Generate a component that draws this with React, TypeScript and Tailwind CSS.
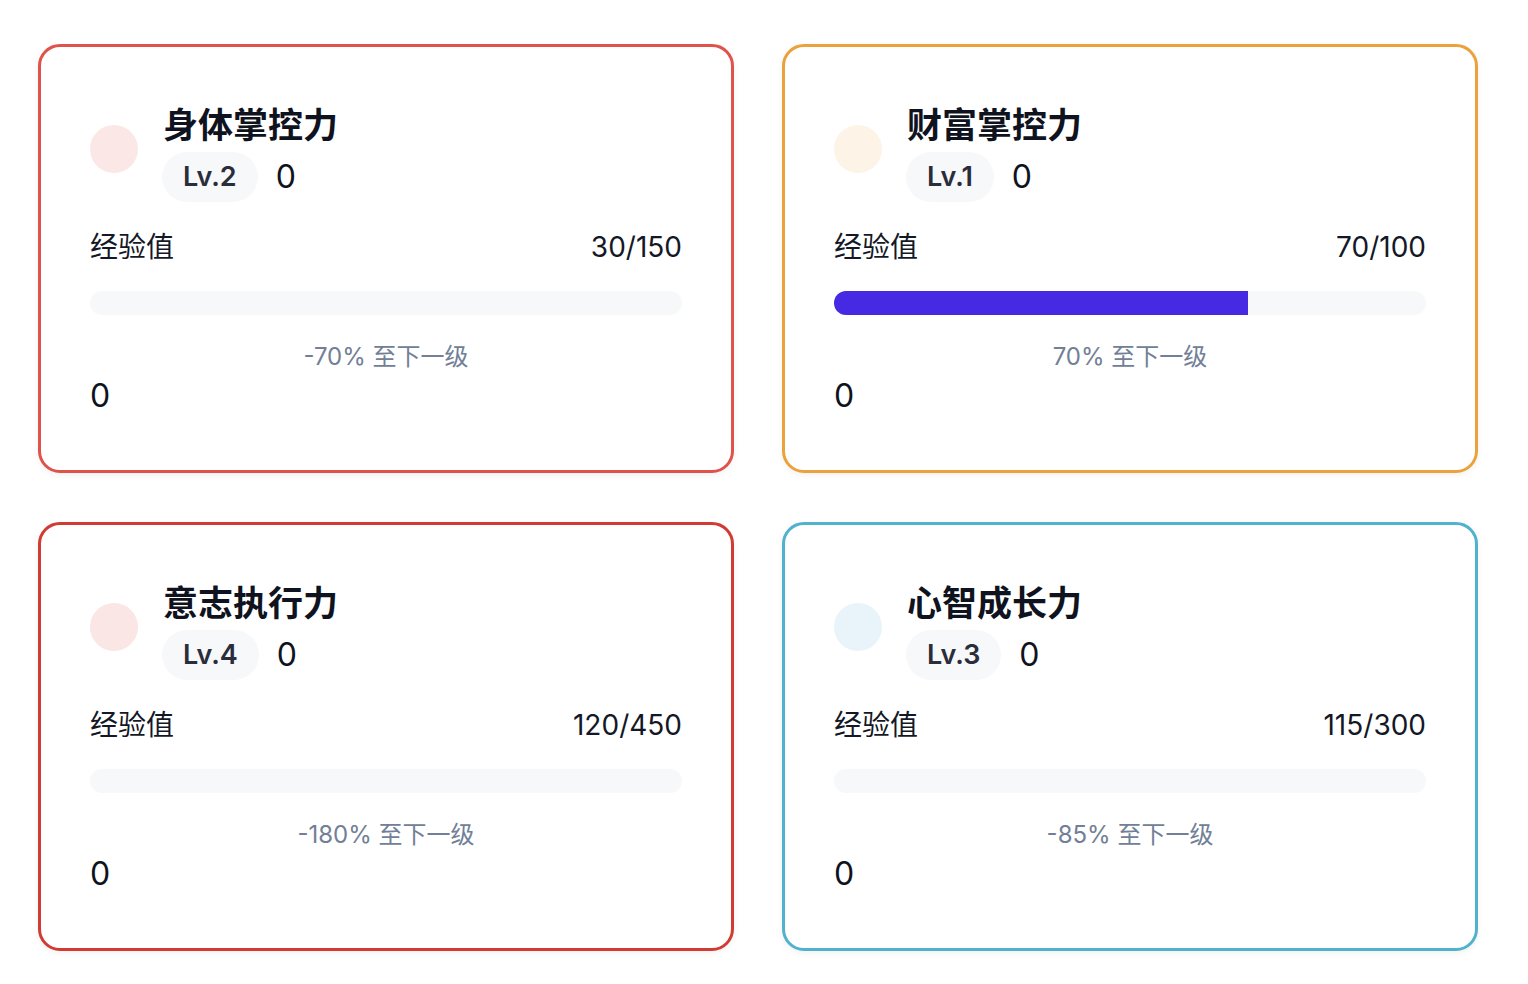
import React from "react";

type Skill = {
  name: string;
  level: number;
  exp: number;
  max: number;
  percent: string;
  fill: number;
  border: string;
  dot: string;
};

const SKILLS: Skill[] = [
  {
    name: "身体掌控力",
    level: 2,
    exp: 30,
    max: 150,
    percent: "-70%",
    fill: 0,
    border: "border-[#e0534b]",
    dot: "bg-[#fbe8e6]",
  },
  {
    name: "财富掌控力",
    level: 1,
    exp: 70,
    max: 100,
    percent: "70%",
    fill: 70,
    border: "border-[#eba23c]",
    dot: "bg-[#fdf3e6]",
  },
  {
    name: "意志执行力",
    level: 4,
    exp: 120,
    max: 450,
    percent: "-180%",
    fill: 0,
    border: "border-[#d03b33]",
    dot: "bg-[#f9e6e5]",
  },
  {
    name: "心智成长力",
    level: 3,
    exp: 115,
    max: 300,
    percent: "-85%",
    fill: 0,
    border: "border-[#50b2cd]",
    dot: "bg-[#e8f4f9]",
  },
];

function SkillCard({ skill }: { skill: Skill }): React.ReactElement {
  return (
    <article
      className={`rounded-[22px] border-[3px] bg-white px-[49px] pt-[56px] pb-[54px] shadow-[0_2px_6px_rgba(0,0,0,0.06)] ${skill.border}`}
    >
      <header className="flex items-start gap-[26px]">
        <div className={`mt-[22px] h-12 w-12 shrink-0 rounded-full ${skill.dot}`} />
        <div className="flex flex-col">
          <h2 className="-ml-[1px] text-[35px] font-bold leading-[44px] text-[#0f1320]">
            {skill.name}
          </h2>
          <div className="mt-[5px] flex items-center gap-[18px]">
            <span className="-ml-[2px] inline-flex h-[50px] items-center rounded-full bg-[#f7f8fa] px-[21px] text-[27px] font-semibold text-[#2a2d3a]">
              Lv.{skill.level}
            </span>
            <span className="text-[32px] text-[#0f1320]">0</span>
          </div>
        </div>
      </header>

      <div className="mt-[27px] flex items-center justify-between text-[28px] leading-[36px] text-[#141826]">
        <span>经验值</span>
        <span>
          {skill.exp}/{skill.max}
        </span>
      </div>

      <div className="mt-[26px] h-6 w-full overflow-hidden rounded-full bg-[#f7f8fa]">
        <div
          className="h-full bg-[#4529e3]"
          style={{ width: `${skill.fill}%` }}
        />
      </div>

      <p className="mt-[27px] text-center text-[24px] leading-[30px] text-[#718096]">
        {skill.percent} 至下一级
      </p>
      <p className="mt-[4px] text-[32px] leading-[40px] text-[#0f1320]">0</p>
    </article>
  );
}

export default function App(): React.ReactElement {
  return (
    <div
      className="min-h-screen bg-white pl-[38px] pr-[50px] pt-[44px] pb-[33px]"
      style={{ fontFamily: 'Inter, "Noto Sans CJK SC", sans-serif' }}
    >
      <div className="grid grid-cols-2 gap-x-[48px] gap-y-[49px]">
        {SKILLS.map((s) => (
          <SkillCard key={s.name} skill={s} />
        ))}
      </div>
    </div>
  );
}
